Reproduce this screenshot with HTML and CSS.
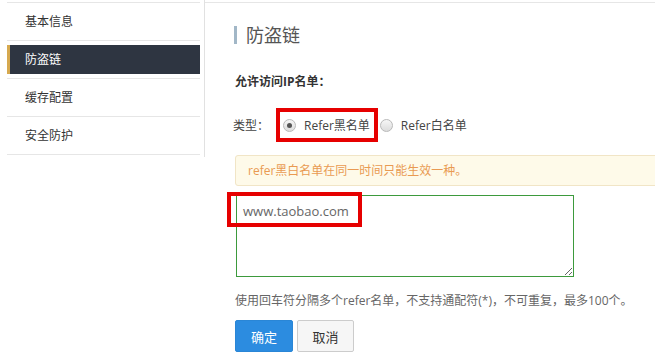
FILE: index.html
```html
<!DOCTYPE html>
<html lang="zh-CN">

<head>
    <meta charset="UTF-8">
    <meta name="viewport" content="width=device-width, initial-scale=1.0">
    <title>防盗链</title>
    <link rel="stylesheet" href="styles.css">
</head>

<body>
    <div class="page">
        <aside class="side">
            <ul class="menu">
                <li class="menu-item">基本信息</li>
                <li class="menu-item active"><span>防盗链</span></li>
                <li class="menu-item">缓存配置</li>
                <li class="menu-item">安全防护</li>
            </ul>
        </aside>
        <main class="main">
            <h2 class="title">防盗链</h2>
            <div class="label">允许访问IP名单：</div>
            <div class="type-row">
                <span class="type-label">类型：</span>
                <label class="radio marked"><span class="dot checked"></span>Refer黑名单</label>
                <label class="radio"><span class="dot"></span>Refer白名单</label>
            </div>
            <div class="alert">refer黑白名单在同一时间只能生效一种。</div>
            <div class="area-wrap">
                <textarea class="area">www.taobao.com</textarea>
                <span class="mark-text"></span>
            </div>
            <p class="help">使用回车符分隔多个refer名单，不支持通配符(*)，不可重复，最多100个。</p>
            <div class="actions">
                <button class="btn primary">确定</button>
                <button class="btn">取消</button>
            </div>
        </main>
    </div>
</body>

</html>
```

FILE: styles.css
```css
* {
    margin: 0;
    padding: 0;
    box-sizing: border-box;
}

body {
    font-family: "Open Sans", "Noto Sans CJK SC", sans-serif;
    font-size: 12px;
    color: #333;
    background: #fff;
    overflow: hidden;
}

.page {
    display: flex;
    align-items: flex-start;
}

.side {
    width: 205px;
    height: 157px;
    flex-shrink: 0;
    padding: 2px 4px 0 7px;
    border-right: 1px solid #e1e1e1;
}

.menu {
    list-style: none;
    border-top: 1px solid #e6e6e6;
}

.menu-item {
    height: 38px;
    line-height: 37px;
    padding-left: 18px;
    border-bottom: 1px solid #e6e6e6;
}

.menu-item.active {
    padding: 4px 0;
    line-height: 29px;
}

.menu-item.active span {
    display: block;
    height: 29px;
    padding-left: 15px;
    color: #fff;
    background: #2e3541;
    border-left: 3px solid #d6a94f;
}

.main {
    flex: 1;
    min-width: 0;
    margin-top: 2px;
    padding-left: 30px;
    border-top: 1px solid #e6e6e6;
}

.title {
    margin: 23px 0 0 -1px;
    padding-left: 9px;
    font-size: 18px;
    font-weight: normal;
    line-height: 18px;
    color: #555;
    border-left: 3px solid #a2b7c7;
}

.label {
    margin-top: 29px;
    line-height: 18px;
    font-weight: bold;
}

.type-row {
    display: flex;
    align-items: center;
    height: 20px;
    margin-top: 24px;
}

.type-label {
    margin: 0 14px 0 -2px;
    color: #444;
}

.radio {
    position: relative;
    display: flex;
    align-items: center;
    margin-right: 10px;
    color: #444;
}

.marked::after {
    content: "";
    position: absolute;
    left: -7px;
    right: -8px;
    top: -8px;
    bottom: -8px;
    border: 4px solid #e60000;
}

.dot {
    width: 13px;
    height: 13px;
    margin-right: 8px;
    border: 1px solid #b9b9b9;
    border-radius: 50%;
    background: linear-gradient(#f6f6f6, #dcdcdc);
    display: flex;
    align-items: center;
    justify-content: center;
}

.dot.checked::before {
    content: "";
    width: 5px;
    height: 5px;
    border-radius: 50%;
    background: #555;
}

.alert {
    width: 440px;
    height: 31px;
    margin-top: 20px;
    padding: 0 12px;
    line-height: 29px;
    color: #e99a52;
    background: #fefae9;
    border: 1px solid #f1e5c6;
    border-radius: 3px;
}

.area-wrap {
    position: relative;
    width: 338px;
    margin: 9px 0 0 1px;
}

.area {
    display: block;
    width: 338px;
    height: 82px;
    padding: 6px;
    font-family: "Open Sans", "Noto Sans CJK SC", sans-serif;
    font-size: 13px;
    line-height: 18px;
    color: #666;
    border: 1px solid #3d9a3d;
    outline: none;
}

.mark-text {
    position: absolute;
    left: -9px;
    top: -3px;
    width: 135px;
    height: 35px;
    border: 4px solid #e60000;
}

.help {
    margin-top: 15px;
    line-height: 18px;
    color: #666;
}

.actions {
    display: flex;
    gap: 4px;
    margin-top: 10px;
}

.btn {
    width: 57px;
    height: 32px;
    font-family: "Open Sans", "Noto Sans CJK SC", sans-serif;
    font-size: 13px;
    color: #333;
    background: #f6f6f6;
    border: 1px solid #ccc;
    border-radius: 2px;
}

.btn.primary {
    width: 58px;
    color: #fff;
    background: #2c8ce0;
    border-color: #2a86d6;
}
```
